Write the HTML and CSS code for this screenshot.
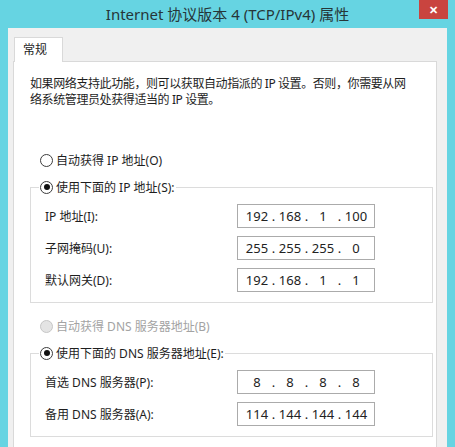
FILE: index.html
```html
<!DOCTYPE html>
<html lang="zh-CN">
<head>
    <meta charset="UTF-8">
    <title>Internet 协议版本 4 (TCP/IPv4) 属性</title>
    <link rel="stylesheet" href="styles.css">
</head>
<body>
    <div class="window">
        <!-- Title bar -->
        <div class="titlebar">
            <span></span>
            <div class="title">Internet 协议版本 4 (TCP/IPv4) 属性</div>
            <div class="close">&#x2715;</div>
        </div>

        <div class="client">
            <div class="tabs">
                <div class="tab">常规</div>
            </div>

            <div class="panel">
                <p class="intro">如果网络支持此功能，则可以获取自动指派的 IP 设置。否则，你需要从网<br>络系统管理员处获得适当的 IP 设置。</p>

                <label class="option">
                    <span class="radio"></span>
                    自动获得 IP 地址(O)
                </label>

                <fieldset class="group">
                    <legend class="option">
                        <span class="radio checked"></span>
                        使用下面的 IP 地址(S):
                    </legend>
                    <div class="field">
                        <span>IP 地址(I):</span>
                        <div class="ip"><b>192</b><i>.</i><b>168</b><i>.</i><b>1</b><i>.</i><b>100</b></div>
                    </div>
                    <div class="field">
                        <span>子网掩码(U):</span>
                        <div class="ip"><b>255</b><i>.</i><b>255</b><i>.</i><b>255</b><i>.</i><b>0</b></div>
                    </div>
                    <div class="field">
                        <span>默认网关(D):</span>
                        <div class="ip"><b>192</b><i>.</i><b>168</b><i>.</i><b>1</b><i>.</i><b>1</b></div>
                    </div>
                </fieldset>

                <label class="option disabled">
                    <span class="radio"></span>
                    自动获得 DNS 服务器地址(B)
                </label>

                <fieldset class="group">
                    <legend class="option">
                        <span class="radio checked"></span>
                        使用下面的 DNS 服务器地址(E):
                    </legend>
                    <div class="field">
                        <span>首选 DNS 服务器(P):</span>
                        <div class="ip"><b>8</b><i>.</i><b>8</b><i>.</i><b>8</b><i>.</i><b>8</b></div>
                    </div>
                    <div class="field">
                        <span>备用 DNS 服务器(A):</span>
                        <div class="ip"><b>114</b><i>.</i><b>144</b><i>.</i><b>144</b><i>.</i><b>144</b></div>
                    </div>
                </fieldset>
            </div>
        </div>
    </div>
</body>
</html>
```

FILE: styles.css
```css
body {
    margin: 0;
    background: #66d4e2;
    font-family: "Noto Sans", "Noto Sans CJK SC", sans-serif;
    font-size: 12px;
    color: #1e1e1e;
    overflow: hidden;
}

.window {
    width: 455px;
    height: 447px;
    display: flex;
    flex-direction: column;
}

/* Title bar */
.titlebar {
    height: 28px;
    display: grid;
    grid-template-columns: 1fr auto 1fr;
    align-items: start;
}

.title {
    font-size: 15px;
    line-height: 28px;
    color: #263638;
    white-space: nowrap;
}

.close {
    justify-self: end;
    margin-right: 7px;
    width: 29px;
    height: 19px;
    background: #c9443f;
    color: #fff;
    font-size: 11px;
    font-weight: bold;
    line-height: 19px;
    text-align: center;
}

.client {
    flex: 1;
    margin: 0 8px;
    padding: 9px 10px 0 5px;
    background: #f0f0f0;
    display: flex;
    flex-direction: column;
}

/* Tab strip */
.tabs {
    display: flex;
    padding-left: 1px;
    margin-bottom: -1px;
    position: relative;
}

.tab {
    width: 49px;
    height: 25px;
    padding-left: 8px;
    box-sizing: border-box;
    line-height: 24px;
    background: #fff;
    border: 1px solid #d9d9d9;
    border-bottom: none;
}

.panel {
    flex: 1;
    background: #fff;
    border: 1px solid #d9d9d9;
    border-bottom: none;
    padding: 14px 11px 0 16px;
}

.intro {
    margin: 0 0 42px;
    line-height: 16px;
    letter-spacing: -0.4px;
    white-space: nowrap;
}

/* Radio buttons */
.option {
    display: flex;
    align-items: center;
    gap: 3px;
    height: 20px;
    margin-left: 10px;
}

.radio {
    width: 11px;
    height: 11px;
    border: 1px solid #3c3c3c;
    border-radius: 50%;
    background: #fff;
    display: flex;
    align-items: center;
    justify-content: center;
}

.radio.checked::after {
    content: "";
    width: 6px;
    height: 6px;
    border-radius: 50%;
    background: #111;
}

.option.disabled {
    color: #a3a3a3;
    margin-top: 13px;
    margin-bottom: 7px;
}

.option.disabled .radio {
    background: #e4e4e4;
    border-color: #c6c6c6;
}

/* Group boxes */
.group {
    margin: 7px 0 0;
    padding: 0 0 10px 8px;
    width: 393px;
    border: 1px solid #dcdcdc;
    display: flex;
    flex-direction: column;
    gap: 8px;
}

.group legend.option {
    margin-left: 0;
    padding: 0 1px;
}

.group legend + .field {
    margin-top: 7px;
}

.field {
    display: grid;
    grid-template-columns: 192px 138px;
    align-items: center;
    padding-left: 6px;
}

/* IP address boxes */
.ip {
    height: 24px;
    box-sizing: border-box;
    border: 1px solid #ababab;
    display: flex;
    align-items: center;
    padding-left: 6px;
    font-size: 13px;
    color: #222;
}

.ip b {
    width: 26px;
    text-align: center;
    font-weight: normal;
}

.ip i {
    width: 7px;
    text-align: center;
    font-style: normal;
}
```
